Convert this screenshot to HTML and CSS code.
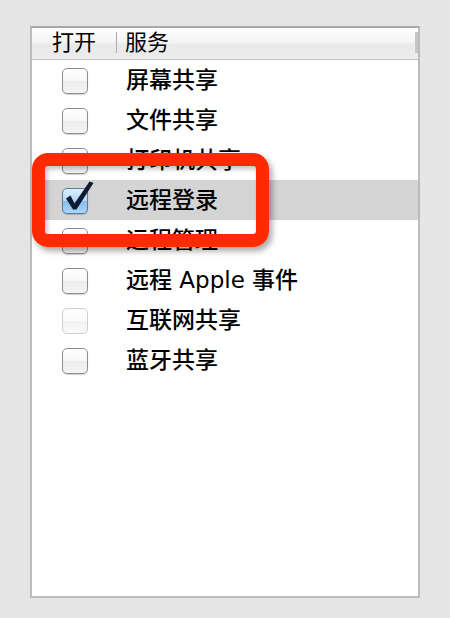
FILE: index.html
```html
<!DOCTYPE html>
<html lang="zh-CN">
<head>
  <meta charset="UTF-8" />
  <title>共享服务</title>
  <link rel="stylesheet" href="styles.css">
</head>
<body>

<div class="panel">
  <div class="table-head">
    <div class="col-on">打开</div>
    <div class="col-name">服务</div>
    <div class="col-end"></div>
  </div>

  <div class="list">
    <div class="row"><div class="col-on"><span class="box"></span></div><div class="col-name">屏幕共享</div></div>
    <div class="row"><div class="col-on"><span class="box"></span></div><div class="col-name">文件共享</div></div>
    <div class="row"><div class="col-on"><span class="box"></span></div><div class="col-name">打印机共享</div></div>
    <div class="row selected">
      <div class="col-on">
        <span class="box checked">
          <svg class="tick" viewBox="0 0 34 34" width="34" height="34">
            <path d="M4 18.5 L8.5 15.5 L12.5 23.5 L27.5 1.5 L31.5 3 L14.5 29.5 L11 29.5 Z" fill="#0e1b30"/>
          </svg>
        </span>
      </div>
      <div class="col-name">远程登录</div>
    </div>
    <div class="row"><div class="col-on"><span class="box"></span></div><div class="col-name">远程管理</div></div>
    <div class="row"><div class="col-on"><span class="box"></span></div><div class="col-name">远程 Apple 事件</div></div>
    <div class="row"><div class="col-on"><span class="box disabled"></span></div><div class="col-name">互联网共享</div></div>
    <div class="row"><div class="col-on"><span class="box"></span></div><div class="col-name">蓝牙共享</div></div>

    <div class="callout"></div>
  </div>
</div>

</body>
</html>
```

FILE: styles.css
```css
* { box-sizing: border-box; margin: 0; padding: 0; }
body {
  background: #e5e5e5;
  font-family: "Lucida Grande", "DejaVu Sans", "Noto Sans CJK SC", sans-serif;
  color: #000;
}
.panel {
  margin: 26px 0 0 30px;
  width: 390px;
  height: 572px;
  background: #fff;
  border: 2px solid #bcbcbc;
  border-top-color: #a8a8a8;
}
.table-head {
  display: flex;
  height: 32px;
  padding-bottom: 3px;
  background: linear-gradient(#ffffff, #f4f4f4 45%, #e9e9e9 55%, #ececec);
  border-bottom: 1px solid #c2c2c2;
  font-size: 22px;
  align-items: center;
}
.table-head .col-on {
  width: 85px;
  text-align: center;
  border-right: 1px solid #ababab;
  line-height: 21px;
}
.table-head .col-name {
  flex: 1;
  padding-left: 8px;
  line-height: 21px;
}
.table-head .col-end {
  width: 3px;
  height: 21px;
  background: #c6c6c6;
}
.list {
  position: relative;
}
.row {
  display: flex;
  align-items: center;
  height: 40px;
  font-size: 23px;
}
.row.selected {
  background: #d4d4d4;
}
.row .col-on {
  width: 85px;
  display: flex;
  justify-content: center;
}
.row .col-name {
  flex: 1;
  padding-left: 9px;
  padding-bottom: 5px;
  font-weight: 500;
}
.box {
  position: relative;
  display: block;
  width: 26px;
  height: 26px;
  margin-top: 2px;
  border: 1px solid #8e8e8e;
  border-radius: 5px;
  background: linear-gradient(#ffffff, #f7f7f7 48%, #ececec 52%, #f5f5f5);
  box-shadow: 0 1px 1px rgba(0,0,0,0.18);
}
.box.disabled {
  border-color: #cfcfcf;
  background: linear-gradient(#ffffff, #fafafa 50%, #f3f3f3 52%, #fafafa);
  box-shadow: none;
}
.box.checked {
  border-color: #5e7a98;
  background: linear-gradient(#dcefff, #b4d9f8 48%, #86bdef 52%, #a9d6fb);
}
.tick {
  position: absolute;
  left: -1px;
  top: -9px;
}
.callout {
  position: absolute;
  left: 0;
  top: 93px;
  width: 237px;
  height: 94px;
  border: 13px solid #ff2a00;
  border-radius: 16px;
  box-shadow: 3px 4px 6px rgba(0,0,0,0.35), inset 2px 3px 5px rgba(0,0,0,0.25);
}
```
